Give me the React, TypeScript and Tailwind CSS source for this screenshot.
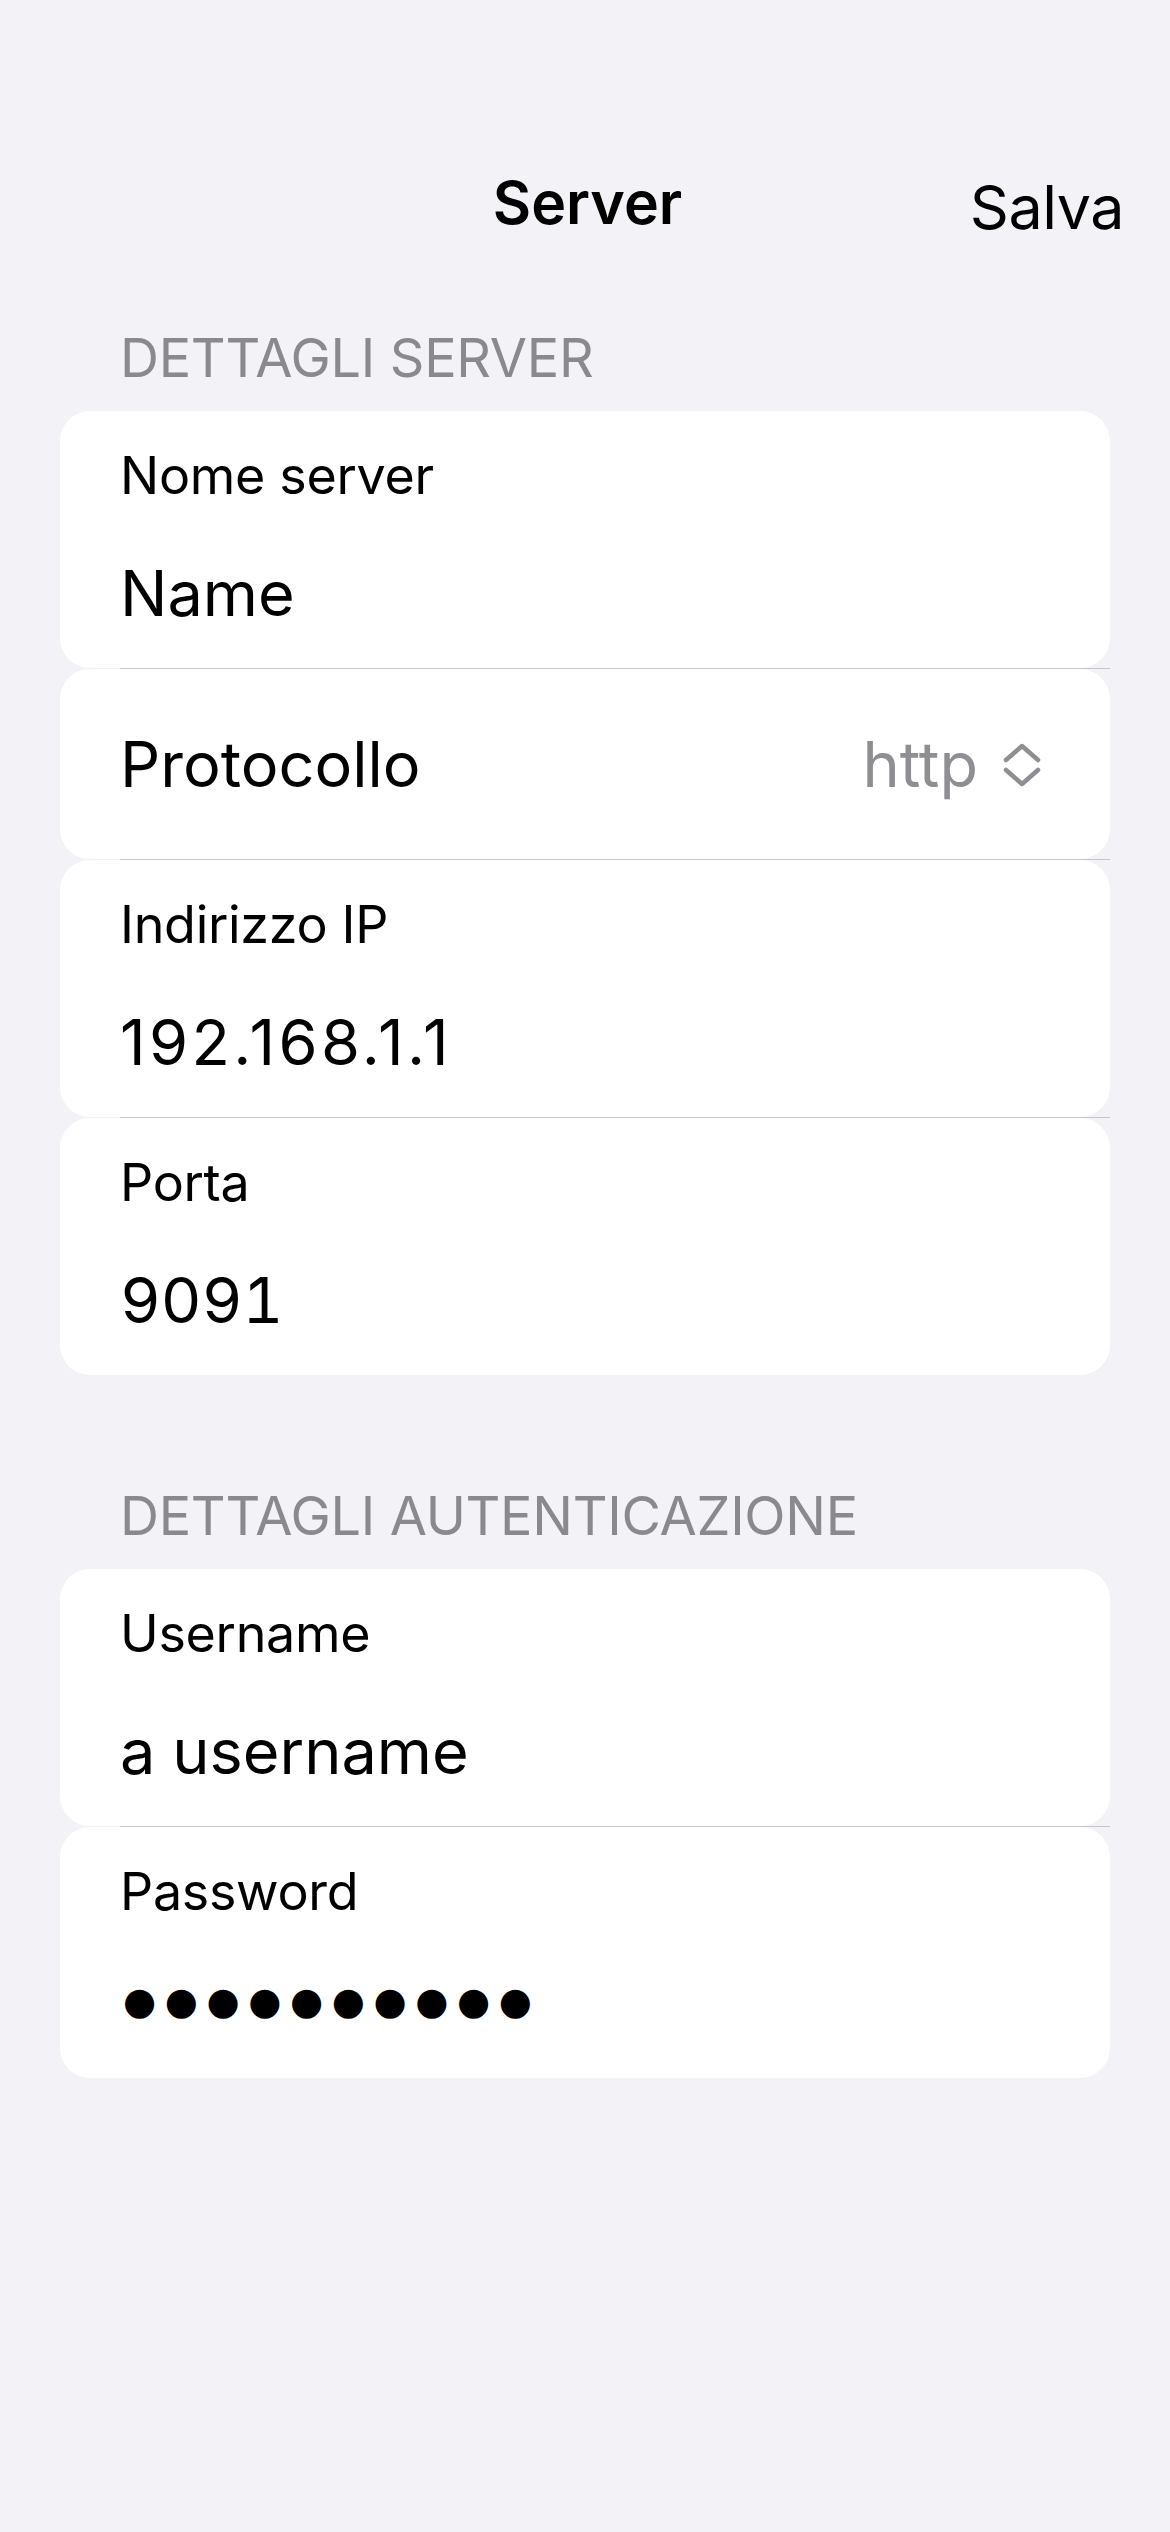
import React from 'react'

function Separator() {
  return <div className="h-px ml-[60px] bg-[#c6c6c8]" />
}

function FieldRow({ label, value, valueClass = 'tabular-nums' }: { label: string; value: string; valueClass?: string }) {
  return (
    <div className="h-[257px] bg-white rounded-[30px] px-[60px] pt-[35px] flex flex-col">
      <div className="text-[52px] leading-[60px] tracking-[-0.3px] text-black">{label}</div>
      <div className={`mt-[51px] text-[63px] leading-[72px] text-black ${valueClass}`}>{value}</div>
    </div>
  )
}

function ProtocolRow() {
  return (
    <div className="h-[190px] bg-white rounded-[30px] pl-[60px] pr-[68px] flex items-center justify-between">
      <span className="text-[63px] leading-[72px] text-black">Protocollo</span>
      <div className="flex items-center gap-[24px]">
        <span className="text-[63px] leading-[72px] text-[#8e8e93]">http</span>
        <svg width="40" height="46" viewBox="0 0 40 46" fill="none" className="mt-[2px]">
          <path d="M4 18 L20 4 L36 18" stroke="#8e8e93" strokeWidth="4.5" strokeLinecap="round" strokeLinejoin="round" />
          <path d="M4 28 L20 42 L36 28" stroke="#8e8e93" strokeWidth="4.5" strokeLinecap="round" strokeLinejoin="round" />
        </svg>
      </div>
    </div>
  )
}

function PasswordRow() {
  return (
    <div className="h-[251px] bg-white rounded-[30px] px-[60px] pt-[35px] flex flex-col">
      <div className="text-[52px] leading-[60px] tracking-[-0.3px] text-black">Password</div>
      <div className="mt-[60px] ml-[3px] text-[38px] leading-[38px] tracking-[8.6px] text-black [font-family:'DejaVu_Sans',sans-serif]">
        ●●●●●●●●●●
      </div>
    </div>
  )
}

function SectionHeader({ children }: { children: React.ReactNode }) {
  return <div className="pl-[120px] text-[54px] leading-[64px] tracking-[-0.3px] text-[#8a8a8e] uppercase">{children}</div>
}

export default function App() {
  return (
    <div className="min-h-[2532px] w-[1170px] bg-[#f2f2f7] [font-family:Inter,sans-serif]">
      <div className="grid grid-cols-[1fr_auto_1fr] items-start pt-[168px] pl-[51px] pr-[46px]">
        <div />
        <div className="text-[59px] leading-[70px] font-semibold text-black">Server</div>
        <div className="mt-[4px] text-right text-[61px] leading-[70px] tracking-[-0.5px] text-black">Salva</div>
      </div>

      <div className="mt-[84px]">
        <SectionHeader>Dettagli server</SectionHeader>
        <div className="mt-[21px] mx-[60px] flex flex-col">
          <FieldRow label="Nome server" value="Name" />
          <Separator />
          <ProtocolRow />
          <Separator />
          <FieldRow label="Indirizzo IP" value="192.168.1.1" valueClass="tracking-[3.4px]" />
          <Separator />
          <FieldRow label="Porta" value="9091" />
        </div>
      </div>

      <div className="mt-[109px]">
        <SectionHeader>Dettagli autenticazione</SectionHeader>
        <div className="mt-[21px] mx-[60px] flex flex-col">
          <FieldRow label="Username" value="a username" />
          <Separator />
          <PasswordRow />
        </div>
      </div>
    </div>
  )
}
